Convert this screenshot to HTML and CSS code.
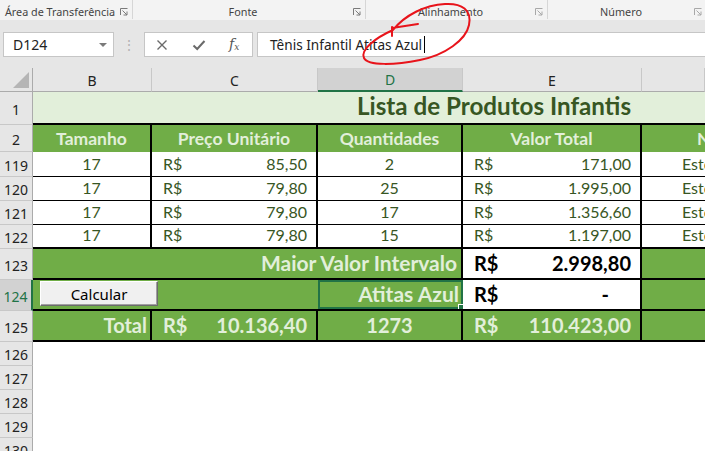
FILE: index.html
```html
<!DOCTYPE html>
<html lang="pt-BR">
<head>
<meta charset="utf-8">
<title>Lista de Produtos Infantis</title>
<link rel="stylesheet" href="styles.css">
</head>
<body>
<div class="app">
  <div class="ribbon">
    <div class="grp g1"><span class="lbl">Área de Transferência</span><svg class="launch" viewBox="0 0 8 8"><path d="M0.5 7V0.5H7.5M2.5 2.5L7 7M7 3.5V7H3.5" fill="none" stroke="#7a7a7a" stroke-width="1"/></svg></div>
    <div class="grp g2"><span class="lbl">Fonte</span><svg class="launch" viewBox="0 0 8 8"><path d="M0.5 7V0.5H7.5M2.5 2.5L7 7M7 3.5V7H3.5" fill="none" stroke="#7a7a7a" stroke-width="1"/></svg></div>
    <div class="grp g3"><span class="lbl">Alinhamento</span><svg class="launch" viewBox="0 0 8 8"><path d="M0.5 7V0.5H7.5M2.5 2.5L7 7M7 3.5V7H3.5" fill="none" stroke="#a8a8a8" stroke-width="1"/></svg></div>
    <div class="grp g4"><span class="lbl">Número</span><svg class="launch" viewBox="0 0 8 8"><path d="M0.5 7V0.5H7.5M2.5 2.5L7 7M7 3.5V7H3.5" fill="none" stroke="#a8a8a8" stroke-width="1"/></svg></div>
  </div>

  <div class="fbar">
    <div class="namebox"><span>D124</span><span class="dd"></span></div>
    <div class="grip">⋮</div>
    <div class="fbtns">
      <svg class="ico" viewBox="0 0 14 14"><path d="M2.5 2.5L11.5 11.5M11.5 2.5L2.5 11.5" stroke="#6a6a6a" stroke-width="1.4" fill="none"/></svg>
      <svg class="ico" viewBox="0 0 14 14"><path d="M1.5 7.5L5.2 11L12.5 3" stroke="#6a6a6a" stroke-width="2" fill="none"/></svg>
      <span class="fx"><i>f</i><sub>x</sub></span>
    </div>
    <div class="finput"><span>Tênis Infantil Atitas Azul</span><span class="caret"></span></div>
  </div>

  <div class="sheet">
    <!-- column headers -->
    <div class="corner"><span class="tri"></span></div>
    <div class="ch">B</div>
    <div class="ch">C</div>
    <div class="ch sel">D</div>
    <div class="ch">E</div>
    <div class="ch"></div>

    <!-- row 1 -->
    <div class="rh">1</div>
    <div class="title">Lista de Produtos Infantis</div>

    <!-- row 2 -->
    <div class="rh">2</div>
    <div class="hd">Tamanho</div>
    <div class="hd">Preço Unitário</div>
    <div class="hd">Quantidades</div>
    <div class="hd">Valor Total</div>
    <div class="hd hdf">Nível de Estoque</div>

    <!-- row 119 -->
    <div class="rh">119</div>
    <div class="c d ctr">17</div>
    <div class="c d acct"><span>R$</span><span>85,50</span></div>
    <div class="c d ctr">2</div>
    <div class="c d acct"><span>R$</span><span>171,00</span></div>
    <div class="c d f">Estoque Baixo</div>

    <!-- row 120 -->
    <div class="rh">120</div>
    <div class="c d ctr">17</div>
    <div class="c d acct"><span>R$</span><span>79,80</span></div>
    <div class="c d ctr">25</div>
    <div class="c d acct"><span>R$</span><span>1.995,00</span></div>
    <div class="c d f">Estoque Alto</div>

    <!-- row 121 -->
    <div class="rh">121</div>
    <div class="c d ctr">17</div>
    <div class="c d acct"><span>R$</span><span>79,80</span></div>
    <div class="c d ctr">17</div>
    <div class="c d acct"><span>R$</span><span>1.356,60</span></div>
    <div class="c d f">Estoque Alto</div>

    <!-- row 122 -->
    <div class="rh">122</div>
    <div class="c d last ctr">17</div>
    <div class="c d last acct"><span>R$</span><span>79,80</span></div>
    <div class="c d last ctr">15</div>
    <div class="c d last acct"><span>R$</span><span>1.197,00</span></div>
    <div class="c d last f">Estoque Alto</div>

    <!-- row 123 -->
    <div class="rh">123</div>
    <div class="g span3 right lbl2">Maior Valor Intervalo</div>
    <div class="w acct"><span>R$</span><span>2.998,80</span></div>
    <div class="g gf"></div>

    <!-- row 124 -->
    <div class="rh sel">124</div>
    <div class="g span2 btncell"><button class="btn">Calcular</button></div>
    <div class="g selcell right lbl2">Atitas Azul</div>
    <div class="w acct"><span>R$</span><span class="dash">-</span></div>
    <div class="g gf"></div>

    <!-- row 125 -->
    <div class="rh">125</div>
    <div class="g tot right">Total</div>
    <div class="g tot acct"><span>R$</span><span>10.136,40</span></div>
    <div class="g tot ctr">1273</div>
    <div class="g tot acct"><span>R$</span><span>110.423,00</span></div>
    <div class="g tot gf"></div>

    <!-- rows 126-130 -->
    <div class="rh">126</div><div class="e"></div><div class="e"></div><div class="e"></div><div class="e"></div><div class="e"></div>
    <div class="rh">127</div><div class="e"></div><div class="e"></div><div class="e"></div><div class="e"></div><div class="e"></div>
    <div class="rh">128</div><div class="e"></div><div class="e"></div><div class="e"></div><div class="e"></div><div class="e"></div>
    <div class="rh">129</div><div class="e"></div><div class="e"></div><div class="e"></div><div class="e"></div><div class="e"></div>
    <div class="rh">130</div><div class="e"></div><div class="e"></div><div class="e"></div><div class="e"></div><div class="e"></div>
  </div>

  <svg class="scribble" width="705" height="80" viewBox="0 0 705 80">
    <path d="M392 36L392 27M392 28L418 24M393 30C405 15 425 5 445 4C462 3 472 10 469 25C466 40 445 55 420 60C395 65 368 66 364 58C360 50 375 38 393 30" fill="none" stroke="#e8141b" stroke-width="2" stroke-linecap="round"/>
  </svg>
</div>
</body>
</html>
```

FILE: styles.css
```css
* { box-sizing: border-box; margin: 0; padding: 0; }
html, body { width: 705px; height: 451px; overflow: hidden; background: #fff; }
body { font-family: "Noto Sans", "Liberation Sans", sans-serif; }

.app { position: relative; width: 705px; height: 451px; overflow: hidden; background: #fff; }

/* ribbon group labels */
.ribbon { height: 20px; background: #f3f3f3; display: flex; }
.grp { display: flex; align-items: center; height: 19px; padding-right: 4px; border-right: 1px solid #d6d6d6; }
.g1 { width: 133px; }
.g2 { width: 233px; }
.g3 { width: 182px; }
.g4 { width: 157px; border-right: none; padding-right: 3px; }
.lbl { flex: 1; text-align: center; font-size: 10.8px; color: #444; padding-top: 4px; white-space: nowrap; }
.launch { width: 8px; height: 8px; margin-top: 5px; }

/* formula bar */
.fbar { height: 48px; background: #e6e6e6; display: flex; align-items: flex-start; padding-top: 12px; }
.namebox { margin-left: 3px; width: 111px; height: 25px; background: #fff; border: 1px solid #c6c6c6; display: flex; align-items: center; padding-left: 9px; font-size: 14px; color: #222; }
.dd { margin-left: auto; margin-right: 6px; width: 0; height: 0; border-left: 4px solid transparent; border-right: 4px solid transparent; border-top: 4px solid #7a7a7a; }
.grip { width: 30px; text-align: center; color: #b4b4b4; line-height: 25px; font-size: 14px; }
.fbtns { width: 109px; height: 25px; background: #fff; border: 1px solid #c6c6c6; display: flex; align-items: center; padding-left: 10px; gap: 23px; }
.ico { width: 14px; height: 14px; }
.fx { font-family: "DejaVu Serif", "Liberation Serif", serif; color: #555; font-size: 14px; width: 14px; line-height: 1; }
.fx i { font-style: italic; }
.fx sub { font-size: 9px; font-style: italic; vertical-align: -1px; }
.finput { flex: 1; margin-left: 4px; height: 25px; background: #fff; border: 1px solid #c6c6c6; border-right: none; display: flex; align-items: center; padding-left: 12px; font-size: 13.6px; color: #222; }
.caret { width: 1px; height: 17px; background: #000; margin-left: 2px; }

/* sheet */
.sheet {
  display: grid;
  grid-template-columns: 33px 119px 166px 145px 179px 63px;
  grid-template-rows: 24px 33px 27px 25px 24px 24px 24px 31px 31px 31px 24px 24px 24px 24px 24px;
  font-family: Lato, "Liberation Sans", sans-serif;
}

.corner { background: #e6e6e6; border-right: 1px solid #ababab; border-bottom: 1px solid #ababab; display: flex; justify-content: flex-end; align-items: flex-end; padding: 0 3px 3px 0; }
.tri { width: 0; height: 0; border-left: 16px solid transparent; border-bottom: 16px solid #b5b5b5; }

.ch { background: #e6e6e6; border-right: 1px solid #c8c8c8; border-bottom: 1px solid #ababab; display: flex; align-items: center; justify-content: center; font-family: "Noto Sans", sans-serif; font-size: 14px; color: #222; padding-top: 1px; }
.ch.sel { background: #d2d2d2; color: #217346; border-bottom: 2px solid #217346; }

.rh { background: #e6e6e6; border-right: 1px solid #ababab; border-bottom: 1px solid #c8c8c8; display: flex; align-items: center; justify-content: center; font-family: "Noto Sans", sans-serif; font-size: 14px; color: #222; padding-top: 2px; }
.rh.sel { background: #d2d2d2; color: #217346; border-right: 2px solid #217346; }

.title { grid-column: span 5; background: #e2efda; border-bottom: 2px solid #000; display: flex; align-items: flex-end; padding: 0 0 3px 324px; font-weight: 700; font-size: 24.2px; line-height: 28px; color: #375623; white-space: nowrap; overflow: hidden; }

.hd { background: #70ad47; border-right: 2px solid #000; display: flex; align-items: flex-end; justify-content: center; padding-bottom: 3px; font-weight: 700; font-size: 17.5px; line-height: 21px; color: #e2efda; white-space: nowrap; overflow: hidden; }
.hdf { justify-content: flex-start; padding-left: 55px; border-right: none; }

.c { display: flex; align-items: flex-end; white-space: nowrap; overflow: hidden; font-size: 16px; line-height: 20px; color: #375623; padding-bottom: 2px; }
.d { border-right: 2px solid #000; border-bottom: 1px solid #000; }
.d.last { border-bottom: 2px solid #000; }
.d.f { border-right: none; padding-left: 40px; }
.e { background: #fff; }

.ctr { justify-content: center; }
.right { justify-content: flex-end; }
.acct { justify-content: space-between; padding-left: 11px; padding-right: 9px; }

.g { background: #70ad47; border-right: 2px solid #000; border-bottom: 2px solid #000; display: flex; align-items: flex-end; white-space: nowrap; overflow: hidden; color: #e2efda; font-weight: 700; padding-bottom: 3px; }
.gf { border-right: none; }
.span3 { grid-column: span 3; }
.span2 { grid-column: span 2; border-right: none; }
.lbl2 { font-size: 21px; line-height: 24px; padding-right: 4px; }

.w { background: #fff; border-right: 2px solid #000; border-bottom: 2px solid #000; display: flex; align-items: flex-end; white-space: nowrap; color: #000; font-weight: 700; font-size: 20px; line-height: 24px; padding-bottom: 3px; }
.dash { padding-right: 22px; }

.btncell { align-items: flex-start; padding: 1px 0 0 7px; }
.btn { width: 118px; height: 25px; background: #f0f0f0; border: 1px solid; border-color: #fff #6b6b6b #6b6b6b #fff; box-shadow: inset -1px -1px 0 #a0a0a0; font-family: "Noto Sans", sans-serif; font-size: 15px; color: #000; line-height: 20px; }

.selcell { position: relative; border-right: none; box-shadow: inset 0 0 0 2px #217346; z-index: 1; }
.selcell::after { content: ""; position: absolute; right: -4px; bottom: -4px; width: 7px; height: 7px; background: #217346; border: 1px solid #fff; }

.tot { font-size: 20px; line-height: 24px; padding-bottom: 3px; }
.tot.right { padding-right: 3px; }

.scribble { position: absolute; left: 0; top: 0; pointer-events: none; }
```
